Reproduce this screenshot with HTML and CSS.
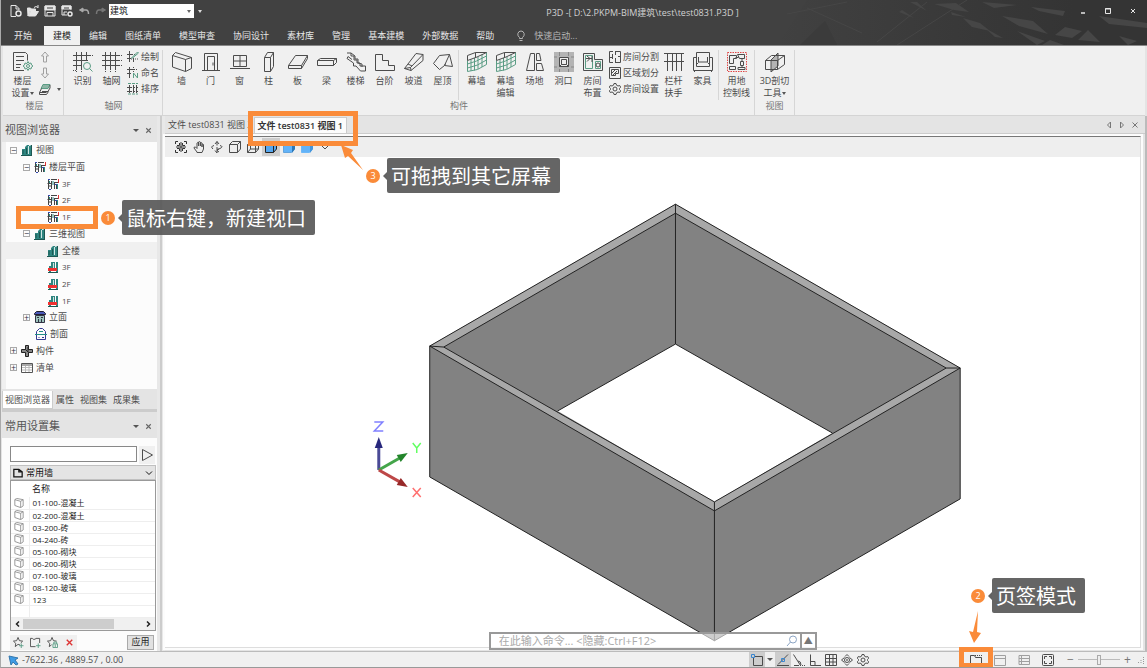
FILE: index.html
```html
<!DOCTYPE html>
<html lang="zh-CN">
<head>
<meta charset="utf-8">
<meta name="viewport" content="width=device-width, initial-scale=1">
<title>P3D</title>
<link rel="stylesheet" href="styles.css">
</head>
<body>
<svg class="sprite" aria-hidden="true">
  <symbol id="wall" viewBox="0 0 20 20"><path d="M.5 3.500l13 4v12l-13-4.500zM.5 3.500l3-3 16 5-6 2M19.500 5.500v11l-6 3"/></symbol>
  <symbol id="door" viewBox="0 0 20 20"><path d="M1 18.500h18M3.500 18.500v-17h13v17M6.500 18.500v-14h7v14M12 10.500v3"/></symbol>
  <symbol id="window" viewBox="0 0 20 20"><path d="M3.500 3.500h13v11h-13zM10 3.500v11M3.500 9h13M0 16.500h20"/></symbol>
  <symbol id="column" viewBox="0 0 20 20"><path d="M5.500 5.500h6v14h-6zM5.500 5.500l3-5h6l-3 5M14.500 .5v14l-3 5"/></symbol>
  <symbol id="slab" viewBox="0 0 20 20"><path d="M.5 13.500l7-10h12l-6 10zM.5 13.500v3h13v-3M13.500 16.500l6-10v-3"/></symbol>
  <symbol id="beam" viewBox="0 0 20 20"><path d="M.5 8.500h16v5h-16zM.5 8.500l3-2h16l-3 2M19.500 6.500v4l-3 3"/></symbol>
  <symbol id="stair" viewBox="0 0 20 20"><path d="M1 1h4v3h3v4h3v3h3v3h5.500v5h-5L10 14H7.500v-3L1 6.500l1-2 4 3M5 1l4 3v3h3v4l4 1v3"/></symbol>
  <symbol id="steps" viewBox="0 0 20 20"><path d="M.5 2.500v16h19v-5h-6v-5h-6v-6z"/></symbol>
  <symbol id="ramp" viewBox="0 0 20 20"><path d="M.5 16.500L12 1.500l7 1v6L7 18.500zM.5 16.500l6-1 12.500-13M6.500 15.500l.5 3M4 12l4 2"/></symbol>
  <symbol id="roof" viewBox="0 0 20 20"><path d="M.5 11.500l6-8 10-1-5 11-5 4zM16.500 2.500l3 12-8-1M11.500 13.500l1-2"/></symbol>
  <symbol id="curtain" viewBox="0 0 20 20"><path class="green" d="M.5 8.500v11l10-2 9-5V.500M.5 12l9-3 10-5M.5 16l10-3 9-5M4 7.500V19M7.500 6v12.500M11 5v12M15 2.500V15"/><path d="M.5 8.500v-5l8-3h11L10 5 .5 8.500M8.500 .5v5"/></symbol>
  <symbol id="site" viewBox="0 0 20 20"><path d="M5.500 1.500h4v17h-8zM11.500 1.500h3l1.500 7h-4.500zM11.500 11.500h5l2 7h-7z"/></symbol>
  <symbol id="hole" viewBox="0 0 20 20"><path class="greyfill" d="M0 0h20v20H0z"/><path d="M5.500 5.500h9v9h-9z" fill="#eee"/><path d="M7.500 7.500h5v5h-5zM5.500 14.500l2-2M14.500 14.500l-2-2"/><path stroke="#888" d="M5.500 0v4M14.500 0v4M0 5h3M17 5h3M0 15h3M17 15h3M5.500 17v3M14.500 17v3"/></symbol>
  <symbol id="room" viewBox="0 0 20 20"><path class="green" d="M2.500 3.500h7v13h-7zM12.500 9.500h5v7h-5z"/><path d="M.5 1.500h11v6h8v11H.5zM3 6.500h6M4 4l3 2.500-3 3M9 4v6"/><circle cx="15" cy="13" r="2"/></symbol>
  <symbol id="railing" viewBox="0 0 20 20"><path d="M0 1.500h20M0 9.500h20M3.500 1v18M8.500 1v18M12.500 1v18M17.500 1v18"/></symbol>
  <symbol id="sofa" viewBox="0 0 20 20"><path d="M3.500 6V.500h13V6M3.500 5.500h-3v13h19v-13h-3M3.500 5.500v9h13v-9M5.500 5v5h9V5M5.500 10.500l-2 2M14.500 10.500l2 2M1.500 18.500v1.500M18.500 18.500v1.500"/></symbol>
  <symbol id="land" viewBox="0 0 20 20"><path class="red" d="M.5 .500h19v19H.5z" stroke-dasharray="1.500 1"/><path d="M2.500 3.500h7v3h-3v5h-4zM10.500 2.500h7v4h-5zM13.500 9.500h3v4h-3zM2.500 14.500h6v3h-6zM11 15.500h7v2h-7zM15 6.500v3M15 13v2M8.500 5.500h3"/></symbol>
  <symbol id="clip" viewBox="0 0 20 20"><path class="greyfill" d="M6 8l7-7v13l-7 6z"/><path d="M.5 8.500h12v9H.5zM.5 8.500l6-5h13l-7 5M19.500 3.500v9l-7 5M6 8l7-7v13l-7 6z"/></symbol>
  <symbol id="floorset" viewBox="0 0 20 20"><path d="M11 18.500H.5V.500h12l2 2v6M3 4.500h8M3 8.500h8M3 12.500h5M3 15.500h4"/><g class="green"><path d="M15 9.500l1 2 2-.5.5 2 1.500 1-1.500 1-.5 2-2-.5-1 2-1-2-2 .5-.5-2-1.500-1 1.500-1 .5-2 2 .5z"/><circle cx="15" cy="14" r="1.500"/></g></symbol>
  <symbol id="identify" viewBox="0 0 20 20"><path d="M0 3.500h17M0 8.500h15M0 13.500h9M3.500 0v17M8.500 0v17M13.500 0v8"/><path stroke-dasharray="1 1" d="M17 3.500h3M3.500 17v3M8.500 17v3M0 18.500h3"/><g class="green"><circle cx="14" cy="14" r="3.500"/><path d="M16.500 16.500l3 3"/></g></symbol>
  <symbol id="grid" viewBox="0 0 20 20"><path d="M0 3.500h17M0 8.500h17M0 13.500h17M3.500 0v17M8.500 0v17M13.500 0v17"/><path stroke-dasharray="1 1" d="M17 3.500h3M17 8.500h3M17 13.500h3M3.500 17v3M8.500 17v3M13.500 17v3"/></symbol>
  <symbol id="up" viewBox="0 0 12 12"><path d="M6 1l3.500 4H7.500v6h-3V5h-2z"/></symbol>
  <symbol id="down" viewBox="0 0 12 12"><path d="M6 11l3.500-4H7.500V1h-3v6h-2z"/></symbol>
  <symbol id="layers" viewBox="0 0 12 12"><path class="green" d="M4 1.500h7l-2 4H2z" fill="#8db5a5"/><path d="M11 2v3L9 8.500H3M2.500 5.500L.5 9.500v2h7l2-3M.5 9.500h7"/></symbol>
  <symbol id="draw" viewBox="0 0 12 12"><path d="M0 3.500h6M0 7.500h4M2.500 0v11M6.500 7v4" /><path d="M7 3.500h2M4 8h7" stroke-dasharray="1 1"/><path class="green" d="M4.500 7l6-6 1 1-6 5z"/></symbol>
  <symbol id="rename" viewBox="0 0 12 12"><path d="M0 2.500h7M0 6.500h4M2.500 0v11" /><path d="M7 2.500h4M6.500 0v5" stroke-dasharray="1 1"/><path class="green" d="M6.500 11V6l4 5V6"/></symbol>
  <symbol id="sort" viewBox="0 0 12 12"><path stroke-dasharray="2 1" d="M0 4.500h12M0 8.500h12"/><path d="M2.500 2v8M6.500 2v8M9.500 2v8"/><path class="green" d="M1 .5h3M5 .5h3M9 .5h2M1 11h3M5 11h3M9 11h2"/></symbol>
  <symbol id="split" viewBox="0 0 12 12"><path d="M4 .5H.5v11H4M6.500 .5h5v11h-5M3.500 3v5M0 6.500h3M6.500 0v4M9 5.500h3M6.500 7v5"/></symbol>
  <symbol id="zone" viewBox="0 0 12 12"><path d="M.5 .500h11v11H.5zM2.500 2.500h7v4h-3v2h-4zM3 6l3-3M4 8l4-4"/></symbol>
  <symbol id="gear" viewBox="0 0 12 12"><path d="M5 .5h2l.5 1.700L9 3l1.700-.5 1 1.700L10.500 5.500v1l1.200 1.300-1 1.700L9 9l-1.500.8L7 11.500H5l-.5-1.700L3 9l-1.700.5-1-1.700L1.500 6.500v-1L.3 4.200l1-1.700L3 3l1.500-.8z"/><circle cx="6" cy="6" r="2"/></symbol>
  <symbol id="new" viewBox="0 0 12 12"><path d="M6 11.500H1V.500h5l3 3V5M6 .5V4h3"/><circle cx="8.500" cy="8.500" r="2.500" stroke-width="1.500"/></symbol>
  <symbol id="open" viewBox="0 0 12 12"><path fill="currentColor" d="M.5 3h3l1 1h4v2H3L1 11zM3.500 6.500h8l-3 4.500H1.500z"/><path d="M7 2.500q2-2 4 0M11 0v3"/></symbol>
  <symbol id="save" viewBox="0 0 12 12"><path fill="currentColor" d="M1 1h10v4H1z"/><path d="M1 1h10v10H1zM3 11V7.500h6V11"/><path d="M3 3h6" stroke="#414141"/></symbol>
  <symbol id="saveas" viewBox="0 0 12 12"><path fill="currentColor" d="M1 1h9v3H1z"/><path d="M6 10H1V1h9v4M3 10V7h3"/><path stroke="#414141" d="M3 3h5"/><circle cx="9" cy="9" r="2" stroke-width="1.500"/></symbol>
  <symbol id="undo" viewBox="0 0 12 12"><path fill="currentColor" d="M5 3v4L1.500 5z"/><path d="M4 5h4q2.500 0 2.500 4" stroke-width="1.500"/></symbol>
  <symbol id="bulb" viewBox="0 0 12 12"><path d="M4.500 8.500v-1Q2.500 6 2.800 3.700 3.500 1 6 1t3.200 2.700Q9.500 6 7.500 7.500v1zM4.500 10.500h3"/></symbol>
  <symbol id="city" viewBox="0 0 12 12"><path fill="#2f8580" stroke="none" d="M1 5h3v6H1zM4 3l2-2h2v10H4zM8 2l3-1v10H8z"/><path stroke="#1d5752" d="M0 11.500h11M2 6v4M5.500 4v6M10.500 1v10"/><path stroke="#cfe6e3" d="M7.500 2v8"/></symbol>
  <symbol id="cityred" viewBox="0 0 12 12"><path fill="#2f8580" stroke="none" d="M2 5h2v6H2zM4 1h4v9H4zM9 1h2v10H9z"/><path stroke="#cfe6e3" d="M6.500 2v6"/><path fill="#f03030" stroke="none" d="M1 7h9v3H1z"/><path stroke="#1d5752" d="M1 11.500h10"/></symbol>
  <symbol id="plan" viewBox="0 0 12 12"><path stroke="#444" d="M1.500 1v10M.5 5.500h4M4.500 3v8M4 1.500h6M2 8h3M7.500 4v7M7 4.500h4M9.500 7v4"/><path stroke="#2c8b85" d="M2.500 3v2M6 3v4M10.500 6v5"/><path stroke="#d33" d="M11.500 1v4"/><path stroke="#334ab0" d="M1 1.500h2M2 11.500h2M8 6.500h2"/></symbol>
  <symbol id="facade" viewBox="0 0 12 12"><path fill="#4a58b8" stroke="#223" d="M.5 2.500l2-2h7l2 2v1H.500z"/><path stroke="#334" fill="#9dc4bd" d="M1.500 4.500h9v7h-9z"/><path stroke="#334" d="M4.500 8v4M7.500 8v4M3 6.500h2M7 6.500h2"/></symbol>
  <symbol id="section" viewBox="0 0 12 12"><path stroke="#353a93" d="M1.500 6V3.500l3-3h3l3 3V6M1.500 7v4.500h9V7"/><path stroke="#238f88" d="M0 6.500h12M4 3.500h4"/><path stroke="#353a93" d="M3.500 9.500h1M7 9.500h2"/></symbol>
  <symbol id="component" viewBox="0 0 12 12"><path fill="#888" stroke="#222" d="M4.500 .500h3v4h4v3h-4v4h-3v-4h-4v-3h4z"/><path stroke="#222" d="M4.500 4.500l3 3M7 2v5"/></symbol>
  <symbol id="sheet" viewBox="0 0 12 12"><path fill="#fff" stroke="#555" d="M.5 1.500h11v9H.5z"/><path stroke="#555" d="M1 3h10"/><path stroke="#bbb" d="M1 5.500h10M1 8h10M4.500 4v6M8 4v6"/></symbol>
  <symbol id="fit" viewBox="0 0 12 12"><path d="M.5 3V.500H3M9 .5h2.500V3M11.500 9v2.500H9M3 11.500H.5V9M6 1v10M1 6h10M4.500 2v2.500H2M7.500 2v2.500H10M4.500 10V7.500H2M7.500 10V7.500H10" stroke="#333"/></symbol>
  <symbol id="hand" viewBox="0 0 12 12"><path d="M4 11L1 7q0-1.500 1.500-1L4 7.500V2q.8-1 1.500 0v3V1q.9-1 1.800 0v4-3q.9-.8 1.700 0v4-2.500q.8-.7 1.500 0V8L9 11.500H4z"/></symbol>
  <symbol id="orbit" viewBox="0 0 12 12"><path d="M2 8Q-1 5.500 3 4.500M9 4.500q4 1 0 3L6 8.500M4 3l2-2.500L8 3M6 .5v4M4 9.500L6 12V6M8 8l-2 1.500 2 1.500"/></symbol>
  <symbol id="cube" viewBox="0 0 12 12"><path d="M.5 3.500h8v8h-8zM.5 3.500l3-3h8l-3 3M11.500 .5V8l-3 3.500"/></symbol>
  <symbol id="wirecube" viewBox="0 0 12 12"><path d="M.5 3.500h8v8h-8zM.5 3.500l3-3h8l-3 3M11.500 .5V8l-3 3.500M3.500 .5V8h8M3.500 8l-3 3.500"/></symbol>
  <symbol id="bluecube" viewBox="0 0 12 12"><path fill="#56a7ef" stroke="#222" d="M.5 3.500l3-3h8V8l-3 3.500h-8z"/><path stroke="#222" d="M.5 3.500h8v8M8.500 3.500l3-3"/></symbol>
  <symbol id="shaded" viewBox="0 0 12 12"><path fill="#62b3f8" stroke="#62a3dc" d="M.5 3.500l3-3h8V8l-3 3.500h-8z"/><path fill="#2d78b8" stroke="none" d="M9 4l3-3v7l-3 4z"/></symbol>
  <symbol id="paleblue" viewBox="0 0 12 12"><path fill="#62b3f8" stroke="#6db8f8" d="M.5 3.500l3-3h8V8l-3 3.500h-8z"/><path fill="#4596dc" stroke="none" d="M9 4l3-3v7l-3 4z"/></symbol>
  <symbol id="more" viewBox="0 0 12 12"><path d="M2.500 4.500L6 8l3.500-3.500L6 1z"/></symbol>
  <symbol id="play" viewBox="0 0 12 12"><path d="M1.500 .5l10 5.500-10 5.500z"/></symbol>
  <symbol id="rowwall" viewBox="0 0 12 12"><path d="M1 2l7 2v7.500L1 9zM1 2l2-1.500 8 1.500-3 2M11 2v7.500l-3 2"/></symbol>
  <symbol id="page" viewBox="0 0 12 12"><path d="M1 1.500h6l4 3v6H1zM7 1.500v3h4" stroke-width="1.500"/></symbol>
  <symbol id="star" viewBox="0 0 12 12"><path d="M7.500 8.500L5.500 8 2.500 10.500 3 7 .5 4.500 4 4l1.500-3.500L7 4l3.500.5-2 2"/><path class="green" d="M6.500 9.500h5M9 7v5"/></symbol>
  <symbol id="addset" viewBox="0 0 12 12"><path d="M6 10.500H.5v-9h2l1 1h2l1-1h4v5"/><path class="green" d="M6.500 9.500h5M9 7v5"/></symbol>
  <symbol id="lockstar" viewBox="0 0 12 12"><path d="M5 8.500L2.500 10.500 3 7 .5 4.500 4 4l1.500-3.500L7 4l3.500.5"/><path class="green" d="M6.500 7.500h5v4h-5zM7.500 7.500v-2h3v2M9 8v3"/></symbol>
  <symbol id="cross" viewBox="0 0 12 12"><path d="M3 3l6 6M9 3L3 9" stroke-width="1.500"/></symbol>
  <symbol id="snap" viewBox="0 0 12 12"><path d="M3 2.500h8.500v9h-9V4"/><path stroke="#3a86d0" d="M.5 .500h3v3h-3z"/></symbol>
  <symbol id="near" viewBox="0 0 12 12"><path d="M0 11.500h12M1 10.500l10-10"/><path stroke="#3a86d0" d="M4.500 4.500h3v3h-3z"/></symbol>
  <symbol id="polar" viewBox="0 0 12 12"><path d="M.5 .5l7 11M1 11.500h5M5 7q3 0 3 4"/><path stroke-dasharray="1 1" d="M7 11.500h5"/></symbol>
  <symbol id="ortho" viewBox="0 0 12 12"><path d="M1.500 .5v11H12M1.500 7.500H6v4"/></symbol>
  <symbol id="mesh" viewBox="0 0 12 12"><path d="M.5 .500h11v11H.5zM4.500 .5v11M8 .5v11M.5 4.500h11M.5 8h11"/></symbol>
  <symbol id="target" viewBox="0 0 12 12"><path d="M.5 6L3.500 3.500M.5 6l3 2.500M11.500 6l-3-2.500M11.500 6l-3 2.500M4 2.500L6 .5l2 2M4 9.500l2 2 2-2"/><circle cx="6" cy="6" r="2.500"/><circle cx="6" cy="6" r=".5"/></symbol>
  <symbol id="tabmode" viewBox="0 0 12 12"><path d="M.5 1.500h4l1 2h6v8H.500z"/><path stroke-dasharray="1 1" d="M5 1.500h7"/></symbol>
  <symbol id="single" viewBox="0 0 12 12"><path d="M.5 1.500h11v10H.5zM.5 4.500h11"/></symbol>
  <symbol id="rows" viewBox="0 0 12 12"><path d="M1 1.500h10.500v9H1zM1 4.500h10.500M1 7.500h10.500M3.500 1v10"/></symbol>
  <symbol id="full" viewBox="0 0 12 12"><rect x=".5" y=".5" width="11" height="11" rx="1"/><path d="M2.500 5V2.500H5M7 2.500h2.500V5M9.500 7v2.500H7M5 9.500H2.500V7"/></symbol>
  <symbol id="pointer" viewBox="0 0 12 12"><path fill="#3f9be5" stroke="#3477ad" d="M1 2l9 2-3 2 3 4-2 1-3-3-2 3z"/></symbol>
  <symbol id="lens" viewBox="0 0 12 12"><circle cx="7" cy="4.500" r="3.500"/><path d="M4.500 7L1 11"/></symbol>
</svg>

<div class="app">
  <header class="header">
    <svg class="skyline" viewBox="0 0 370 45" preserveAspectRatio="xMaxYMin slice" aria-hidden="true">
      <defs><linearGradient id="fade"><stop offset="0" stop-color="#343434" stop-opacity="0"/><stop offset=".55" stop-color="#343434" stop-opacity=".7"/><stop offset=".8" stop-color="#343434"/></linearGradient></defs>
      <path fill="url(#fade)" d="M30 0h340v45H0z"/>
      <path class="beams" d="M10 14l60-12M120 45L190 0M100 42L150 2M30 8l55 25"/>
      <path fill="#3b3b3b" d="M23 45l25-24 12 24z"/>
      <g fill="#464646"><path d="M225 16l31 5 15 13-29-8zM254 7l34 4-2 5-24-5zM322 16l48 7v5l-38-4zM240 31l28 10-8 4zM278 35l10-8 17 4-10 7zM301 40l10-10 12 12zM186 18l17 5 10 8-18-4zM157 4l20 6 15 2-13-9zM205 2l35 3-23 3zM342 36l18 5-9 4zM208 28l18 10-8-1zM174 12l15 5-14-2zM140 2l10 9-17-9zM125 10l12 8-15-6zM265 45l8-5 14 5z"/></g>
    </svg>
    <div class="titlebar">
      <div class="quick">
        <button aria-label="新建"><svg class="i12"><use href="#new"/></svg></button>
        <button aria-label="打开"><svg class="i12"><use href="#open"/></svg></button>
        <button aria-label="保存"><svg class="i12"><use href="#save"/></svg></button>
        <button aria-label="另存为"><svg class="i12"><use href="#saveas"/></svg></button>
        <button aria-label="撤销" class="dim"><svg class="i12"><use href="#undo"/></svg></button>
        <button aria-label="重做" class="dimmer"><svg class="i12 flip"><use href="#undo"/></svg></button>
      </div>
      <div class="profile"><select aria-label="专业"><option>建筑</option></select></div>
      <button class="customize" aria-label="自定义"><i class="caret"></i></button>
      <h1 class="title">P3D -[ D:\2.PKPM-BIM建筑\test\test0831.P3D ]</h1>
      <div class="winctl">
        <button aria-label="最小化"><svg viewBox="0 0 8 8"><path d="M2 6h4" stroke-width="1.500"/></svg></button>
        <button aria-label="最大化"><svg viewBox="0 0 8 8"><path d="M1.500 1.500h5v5h-5zM1 2h6"/></svg></button>
        <button aria-label="关闭"><svg viewBox="0 0 8 8"><path d="M2 2l4 4M6 2L2 6"/></svg></button>
      </div>
    </div>
    <nav class="menu">
      <button class="first">开始</button><button class="active">建模</button><button>编辑</button><button>图纸清单</button><button>模型审查</button><button>协同设计</button><button>素材库</button><button>管理</button><button>基本建模</button><button>外部数据</button><button>帮助</button>
      <label class="launch"><svg class="i12"><use href="#bulb"/></svg><input placeholder="快速启动..." aria-label="快速启动"></label>
    </nav>
  </header>

  <section class="ribbon">
    <div class="group g-floor">
      <div class="tools">
        <button class="tool"><svg class="i20"><use href="#floorset"/></svg><span>楼层<br>设置<i class="caret"></i></span></button>
        <div class="stack">
          <button aria-label="上移"><svg class="i12 grey"><use href="#up"/></svg></button>
          <button aria-label="下移"><svg class="i12 grey"><use href="#down"/></svg></button>
          <button aria-label="楼层显示"><svg class="i12"><use href="#layers"/></svg><i class="caret spaced"></i></button>
        </div>
      </div>
      <h2>楼层</h2>
    </div>
    <div class="group g-axis">
      <div class="tools">
        <button class="tool"><svg class="i20"><use href="#identify"/></svg><span>识别</span></button>
        <button class="tool"><svg class="i20"><use href="#grid"/></svg><span>轴网</span></button>
        <div class="stack">
          <button><svg class="i12"><use href="#draw"/></svg>绘制</button>
          <button><svg class="i12"><use href="#rename"/></svg>命名</button>
          <button><svg class="i12"><use href="#sort"/></svg>排序</button>
        </div>
      </div>
      <h2>轴网</h2>
    </div>
    <div class="group g-parts">
      <div class="tools">
        <button class="tool"><svg class="i20"><use href="#wall"/></svg><span>墙</span></button>
        <button class="tool"><svg class="i20"><use href="#door"/></svg><span>门</span></button>
        <button class="tool"><svg class="i20"><use href="#window"/></svg><span>窗</span></button>
        <button class="tool"><svg class="i20"><use href="#column"/></svg><span>柱</span></button>
        <button class="tool"><svg class="i20"><use href="#slab"/></svg><span>板</span></button>
        <button class="tool"><svg class="i20"><use href="#beam"/></svg><span>梁</span></button>
        <button class="tool"><svg class="i20"><use href="#stair"/></svg><span>楼梯</span></button>
        <button class="tool"><svg class="i20"><use href="#steps"/></svg><span>台阶</span></button>
        <button class="tool"><svg class="i20"><use href="#ramp"/></svg><span>坡道</span></button>
        <button class="tool"><svg class="i20"><use href="#roof"/></svg><span>屋顶</span></button>
        <i class="rule"></i>
        <button class="tool"><svg class="i20"><use href="#curtain"/></svg><span>幕墙</span></button>
        <button class="tool"><svg class="i20"><use href="#curtain"/></svg><span>幕墙<br>编辑</span></button>
        <button class="tool"><svg class="i20"><use href="#site"/></svg><span>场地</span></button>
        <button class="tool"><svg class="i20"><use href="#hole"/></svg><span>洞口</span></button>
        <button class="tool"><svg class="i20"><use href="#room"/></svg><span>房间<br>布置</span></button>
        <div class="stack">
          <button><svg class="i12"><use href="#split"/></svg>房间分割</button>
          <button><svg class="i12"><use href="#zone"/></svg>区域划分</button>
          <button><svg class="i12"><use href="#gear"/></svg>房间设置</button>
        </div>
        <button class="tool"><svg class="i20"><use href="#railing"/></svg><span>栏杆<br>扶手</span></button>
        <button class="tool"><svg class="i20"><use href="#sofa"/></svg><span>家具</span></button>
        <i class="rule"></i>
        <button class="tool"><svg class="i20"><use href="#land"/></svg><span>用地<br>控制线</span></button>
      </div>
      <h2>构件</h2>
    </div>
    <div class="group g-view">
      <div class="tools">
        <button class="tool"><svg class="i20"><use href="#clip"/></svg><span>3D剖切<br>工具<i class="caret"></i></span></button>
      </div>
      <h2>视图</h2>
    </div>
  </section>

  <div class="workspace">
    <aside class="side">
      <section class="browser">
        <header class="panehead"><h2>视图浏览器</h2><button aria-label="菜单"><i class="caret big"></i></button><button aria-label="关闭"><svg class="i12"><use href="#cross"/></svg></button></header>
        <ul class="tree">
          <li class="l1"><button class="exp" aria-label="折叠">−</button><svg class="i12"><use href="#city"/></svg>视图</li>
          <li class="l2"><button class="exp" aria-label="折叠">−</button><svg class="i12"><use href="#plan"/></svg>楼层平面</li>
          <li class="l3"><svg class="i12"><use href="#plan"/></svg>3F</li>
          <li class="l3"><svg class="i12"><use href="#plan"/></svg>2F</li>
          <li class="l3"><svg class="i12"><use href="#plan"/></svg>1F</li>
          <li class="l2"><button class="exp" aria-label="折叠">−</button><svg class="i12"><use href="#city"/></svg>三维视图</li>
          <li class="l3 current"><svg class="i12"><use href="#city"/></svg>全楼</li>
          <li class="l3"><svg class="i12"><use href="#cityred"/></svg>3F</li>
          <li class="l3"><svg class="i12"><use href="#cityred"/></svg>2F</li>
          <li class="l3"><svg class="i12"><use href="#cityred"/></svg>1F</li>
          <li class="l2"><button class="exp" aria-label="展开">+</button><svg class="i12"><use href="#facade"/></svg>立面</li>
          <li class="l2 leaf"><svg class="i12"><use href="#section"/></svg>剖面</li>
          <li class="l1"><button class="exp" aria-label="展开">+</button><svg class="i12"><use href="#component"/></svg>构件</li>
          <li class="l1"><button class="exp" aria-label="展开">+</button><svg class="i12"><use href="#sheet"/></svg>清单</li>
        </ul>
        <nav class="sidetabs"><button class="active">视图浏览器</button><button>属性</button><button>视图集</button><button>成果集</button></nav>
      </section>
      <section class="presets">
        <header class="panehead"><h2>常用设置集</h2><button aria-label="菜单"><i class="caret big"></i></button><button aria-label="关闭"><svg class="i12"><use href="#cross"/></svg></button></header>
        <div class="presetbody">
          <div class="find"><input aria-label="搜索"><button aria-label="执行"><svg class="i12"><use href="#play"/></svg></button></div>
          <div class="kind"><svg class="i12"><use href="#page"/></svg><select aria-label="类别"><option>常用墙</option></select><svg class="chev" viewBox="0 0 8 8"><path d="M1 2.500l3 3 3-3"/></svg></div>
          <div class="list">
            <table>
              <thead><tr><th></th><th>名称</th></tr></thead>
              <tbody>
                <tr><td><svg class="i12"><use href="#rowwall"/></svg></td><td>01-100-混凝土</td></tr>
                <tr><td><svg class="i12"><use href="#rowwall"/></svg></td><td>02-200-混凝土</td></tr>
                <tr><td><svg class="i12"><use href="#rowwall"/></svg></td><td>03-200-砖</td></tr>
                <tr><td><svg class="i12"><use href="#rowwall"/></svg></td><td>04-240-砖</td></tr>
                <tr><td><svg class="i12"><use href="#rowwall"/></svg></td><td>05-100-砌块</td></tr>
                <tr><td><svg class="i12"><use href="#rowwall"/></svg></td><td>06-200-砌块</td></tr>
                <tr><td><svg class="i12"><use href="#rowwall"/></svg></td><td>07-100-玻璃</td></tr>
                <tr><td><svg class="i12"><use href="#rowwall"/></svg></td><td>08-120-玻璃</td></tr>
                <tr><td><svg class="i12"><use href="#rowwall"/></svg></td><td>123</td></tr>
                <tr><td></td><td></td></tr>
              </tbody>
            </table>
            <div class="hscroll"><svg viewBox="0 0 8 8"><path d="M5 1.500L2.500 4 5 6.500"/></svg><div class="track"><div class="thumb"></div></div><svg viewBox="0 0 8 8"><path d="M3 1.500L5.500 4 3 6.500"/></svg></div>
          </div>
          <div class="actions">
            <button aria-label="收藏"><svg class="i12"><use href="#star"/></svg></button>
            <button aria-label="新建集"><svg class="i12"><use href="#addset"/></svg></button>
            <button aria-label="锁定"><svg class="i12"><use href="#lockstar"/></svg></button>
            <button aria-label="删除" class="del"><svg class="i12"><use href="#cross"/></svg></button>
            <button class="apply">应用</button>
          </div>
        </div>
      </section>
    </aside>
    <div class="splitter"></div>
    <main class="docs">
      <nav class="doctabs">
        <button>文件 test0831 视图 2</button><button class="active">文件 test0831 视图 1</button>
        <div class="docctl">
          <button aria-label="上一个"><svg viewBox="0 0 8 8"><path d="M5.500 1v6L2.500 4z"/></svg></button>
          <button aria-label="下一个"><svg viewBox="0 0 8 8"><path d="M2.500 1v6l3-3z"/></svg></button>
          <button aria-label="关闭"><svg viewBox="0 0 8 8"><path d="M1.500 1.500l5 5M6.500 1.500l-5 5"/></svg></button>
        </div>
      </nav>
      <div class="view">
        <div class="viewbar">
          <button aria-label="全图"><svg class="i12"><use href="#fit"/></svg></button>
          <button aria-label="平移"><svg class="i12"><use href="#hand"/></svg></button>
          <button aria-label="旋转"><svg class="i12"><use href="#orbit"/></svg></button>
          <button aria-label="消隐"><svg class="i12"><use href="#cube"/></svg></button>
          <button aria-label="线框"><svg class="i12"><use href="#wirecube"/></svg></button>
          <button aria-label="着色线框" class="on"><svg class="i12"><use href="#bluecube"/></svg></button>
          <button aria-label="着色"><svg class="i12"><use href="#shaded"/></svg></button>
          <button aria-label="真实"><svg class="i12"><use href="#paleblue"/></svg></button>
          <button aria-label="更多"><svg class="i12"><use href="#more"/></svg></button>
        </div>
        <div class="canvas">
          <svg class="model" viewBox="165 157 976 490" role="img" aria-label="三维模型">
            <path class="face" d="M430 346L676 204 961 368V499L715 641 430 477z"/>
            <path class="floor" d="M676 344L833 433 715 502 558 411z"/>
            <path class="top" fill-rule="evenodd" d="M430 346L676 204 961 368 715 511zM444 347L715 502 947 368 676 213z"/>
            <path class="edge" d="M676 204V344M558 411L676 344 833 433M430 346L444 347M961 368H947M715 502V641M430 346V477L715 641 961 499V368"/>
            <g class="triad">
              <path stroke="#4a4a96" d="M379 470V445"/><path fill="#27277c" d="M379 437l4 11h-8z"/>
              <path stroke="#44a54a" d="M379 470L400 458"/><path fill="#23852b" d="M408 453l-7 9-4-7z"/>
              <path stroke="#bd4747" d="M379 470L400 482"/><path fill="#972929" d="M408 487l-11-2 4-7z"/>
              <path class="axis" stroke="#8080ff" d="M374.500 422h8.500l-8.500 9h9"/>
              <path class="axis" stroke="#62ff62" d="M413 443l4 5 4-5M417 448v5"/>
              <path class="axis" stroke="#ff6f6f" d="M413 488l8 9M421 488l-8 9"/>
            </g>
          </svg>
          <div class="command"><input placeholder="在此输入命令... &lt;隐藏:Ctrl+F12&gt;" aria-label="命令"><svg class="i12"><use href="#lens"/></svg><button aria-label="展开">▲</button></div>
        </div>
      </div>
    </main>
  </div>

  <footer class="status">
    <svg class="i12"><use href="#pointer"/></svg>
    <output class="coords">-7622.36 , 4889.57 , 0.00</output>
    <div class="snaps">
      <button class="on" aria-label="捕捉"><svg class="i12"><use href="#snap"/></svg></button><i class="caret big"></i>
      <button class="on" aria-label="最近点"><svg class="i12"><use href="#near"/></svg></button>
      <button aria-label="极轴"><svg class="i12"><use href="#polar"/></svg></button>
      <button aria-label="正交"><svg class="i12"><use href="#ortho"/></svg></button>
      <button aria-label="网格"><svg class="i12"><use href="#mesh"/></svg></button>
      <button aria-label="目标"><svg class="i12"><use href="#target"/></svg></button>
      <button aria-label="设置"><svg class="i12"><use href="#gear"/></svg></button>
    </div>
    <div class="modes">
      <button aria-label="页签模式"><svg class="i12"><use href="#tabmode"/></svg></button>
      <button aria-label="单窗口" class="grey"><svg class="i12"><use href="#single"/></svg></button>
      <button aria-label="平铺" class="grey"><svg class="i12"><use href="#rows"/></svg></button>
      <button aria-label="全屏"><svg class="i12"><use href="#full"/></svg></button>
    </div>
    <div class="zoom"><button aria-label="缩小">−</button><input type="range" aria-label="缩放"><button aria-label="放大">+</button></div>
    <svg class="grip" viewBox="0 0 8 8"><path stroke-dasharray="1 1" d="M7.500 1v7M5 4v4M2.500 6v2"/></svg>
  </footer>

  <div class="mark m1"></div><div class="mark m2"></div><div class="mark m3"></div>
  <div class="note n1"><b>1</b><p>鼠标右键，新建视口</p></div>
  <div class="note n2"><b>2</b><p>页签模式</p></div>
  <div class="note n3"><b>3</b><p>可拖拽到其它屏幕</p></div>
  <svg class="arrow a2" viewBox="0 0 12 32"><path d="M9 0L8 21 12 22 5 32 0 20 4 21z"/></svg>
  <svg class="arrow a3" viewBox="0 0 22 26"><path d="M0 0L12 5 10 8 22 25 7 11 4 13z"/></svg>
</div>
</body>
</html>
```
FILE: styles.css
```css
* { box-sizing: border-box; }
body {
  margin: 0;
  font: 9px/12px "Open Sans", "Noto Sans CJK SC", sans-serif;
  color: #4c4c4c;
}
button, input, select {
  margin: 0;
  padding: 0;
  border: 0;
  border-radius: 0;
  background: none;
  font: inherit;
  color: inherit;
}
button { display: flex; align-items: center; justify-content: center; white-space: nowrap; }
select { appearance: none; }
h1, h2, p, ul { margin: 0; padding: 0; font-size: inherit; font-weight: 400; list-style: none; }
svg { fill: none; stroke: currentColor; stroke-width: 1; flex: none; }
.sprite { position: absolute; width: 0; height: 0; }
.i12 { width: 12px; height: 12px; }
.i20 { width: 20px; height: 20px; }
.flip { transform: scaleX(-1); }
.green { stroke: #5a9c84; }
.red { stroke: #e04848; }
.greyfill { fill: #b4b4b4; stroke: none; }
.grey { color: #a0a0a0; }
.caret {
  display: inline-block;
  border: 2px solid transparent;
  border-top: 3px solid #555;
  border-bottom: 0;
  vertical-align: middle;
}
.caret.big { border-width: 3px 3px 0; }

.app {
  position: relative;
  display: flex;
  flex-direction: column;
  height: 100vh;
  overflow: hidden;
  background: #e4e4e4;
  border-left: 1px solid #aaa;
  border-bottom: 1px solid #999;
}

/* title bar and menu */
.header { position: relative; background: #414141; color: #e6e6e6; border-bottom: 1px solid #888; }
.skyline { position: absolute; right: 0; top: 0; width: 370px; height: 100%; stroke: none; }
.beams { stroke: #464646; }
.titlebar { position: relative; display: flex; align-items: center; height: 26px; padding-bottom: 4px; }
.quick { display: flex; gap: 5px; padding-left: 9px; }
.dim { color: #aaa; }
.dimmer { color: #777; }
.profile { position: relative; margin-left: 2px; width: 85px; height: 14px; background: #fff; color: #111; }
.profile::after { content: ""; position: absolute; right: 3px; top: 6px; border: 2px solid transparent; border-top: 3px solid #666; border-bottom: 0; }
.profile select { display: block; width: 100%; height: 14px; padding-left: 1px; }
.customize { width: 12px; }
.customize .caret { border-top-color: #ddd; }
.title { flex: 1; padding-top: 4px; text-align: center; color: #d2d2d2; }
.winctl { display: flex; gap: 17px; padding-right: 10px; }
.winctl svg { width: 8px; height: 8px; }
.menu { position: relative; display: flex; height: 19px; padding-left: 4px; }
.menu button { padding: 0 9px; }
.menu .first { margin-right: 3px; }
.menu .active { background: #f0f0f0; color: #222; }
.launch { display: flex; align-items: center; margin-left: 12px; gap: 7px; color: #b5b5b5; }
.launch input { width: 60px; }
.launch input::placeholder { color: #b5b5b5; }

/* ribbon */
.ribbon { display: flex; flex: none; height: 70px; margin: 0 2px; padding-top: 4px; background: #f0f0f0; border-bottom: 1px solid #d4d4d4; }
.group { display: flex; flex-direction: column; border-right: 1px solid #d6d6d6; }
.group h2 { text-align: center; color: #777; }
.tools { display: flex; height: 50px; }
.tool { flex-direction: column; justify-content: flex-start; width: 29px; padding-top: 2px; gap: 3px; }
.tool span { line-height: 12px; }
.stack { display: flex; flex-direction: column; gap: 4px; padding-top: 1px; }
.stack button { justify-content: flex-start; gap: 2px; height: 12px; }
.caret.spaced { margin-left: 4px; }
.g-floor { padding: 0 2px 0 5px; }
.g-floor .stack { padding-left: 2px; }
.g-axis { padding: 0 3px 0 4px; }
.g-axis .stack { padding-left: 1px; }
.g-parts { padding: 0 3px 0 4px; }
.g-parts .stack { padding-left: 2px; }
.g-view { padding: 0 5px; }
.rule { width: 1px; margin: 0 3px 0 1px; background: #d6d6d6; }

/* workspace */
.workspace { display: flex; flex: 1; min-height: 0; }
.side { display: flex; flex-direction: column; width: 155px; margin-left: 1px; background: #f0f0f0; }
.panehead { display: flex; align-items: center; flex: none; height: 26px; padding: 2px 2px 0 3px; background: #e4e4e4; color: #666; }
.panehead h2 { flex: 1; font-size: 11px; color: #555; }
.panehead button { width: 13px; }
.panehead .i12 { width: 9px; height: 9px; }
.browser { flex: none; border-bottom: 3px solid #ccc; }
.tree { display: grid; grid-template-rows: repeat(14, 1fr); height: 247px; padding-bottom: 13px; margin-left: 4px; background: #fcfcfc; }
.tree li { display: flex; align-items: center; gap: 3px; }
.l1 { padding-left: 4px; }
.l2 { padding-left: 17px; }
.l3 { padding-left: 41px; font-size: 8px; }
.tree .leaf { padding-left: 29px; }
.tree .current { background: #f0f0f0; font-size: 9px; }
.exp { width: 7px; height: 7px; border: 1px solid #aaa; color: #334; line-height: 5px; margin-right: 1px; }
.sidetabs { display: flex; height: 20px; padding-top: 2px; background: #e4e4e4; }
.sidetabs button { padding: 0 3px; }
.sidetabs .active { padding: 0 2px; background: #fff; border: 1px solid #ccc; border-top: 0; }
.presets { display: flex; flex-direction: column; flex: 1; min-height: 0; }
.presetbody { display: flex; flex-direction: column; flex: 1; min-height: 0; padding: 8px 1px 0 8px; background: #fcfcfc; }
.find { display: flex; height: 18px; gap: 2px; margin-bottom: 1px; }
.find input { flex: 1; min-width: 0; height: 16px; background: #fff; border: 1px solid #888; }
.find button { width: 16px; background: #f0f0f0; margin-right: 1px; }
.kind { display: flex; align-items: center; flex: none; height: 15px; padding: 0 2px; background: #e4e4e4; border: 1px solid #c0c0c0; color: #111; }
.kind select { flex: 1; padding-left: 3px; }
.chev { width: 8px; height: 8px; }
.kind .i12 { width: 10px; height: 10px; }
.list { display: flex; flex-direction: column; justify-content: space-between; flex: 1; min-height: 0; overflow: hidden; background: #fff; border: 1px solid #999; color: #222; }
table { width: 100%; border-collapse: collapse; font-size: 8px; }
th { height: 16px; padding: 0 3px; font-size: 9px; font-weight: 400; text-align: left; }
td { height: 12px; padding: 0 3px; line-height: 11px; border-bottom: 1px solid #eee; }
td:first-child { width: 18px; border-right: 1px solid #eee; color: #888; }
td .i12 { display: block; width: 10px; height: 10px; }
.hscroll { display: flex; align-items: center; flex: none; height: 12px; padding: 0 3px; gap: 1px; background: #f0f0f0; }
.hscroll svg { width: 8px; height: 8px; stroke-width: 1.5; }
.track { flex: 1; height: 10px; }
.thumb { width: 76%; height: 10px; background: #cdcdcd; }
.actions { display: flex; align-items: center; flex: none; height: 20px; padding-top: 2px; }
.actions button { width: 17px; height: 15px; background: #f0f0f0; }
.actions .i12 { width: 11px; height: 11px; }
.actions .del { color: #d33; width: 16px; }
.actions .apply { width: 27px; margin-left: auto; margin-right: 2px; background: #e1e1e1; border: 1px solid #aaa; color: #222; }
.splitter { width: 8px; background: #ccc; border-left: 3px solid #e8e8e8; border-right: 3px solid #e8e8e8; }

/* documents */
.docs { display: flex; flex-direction: column; flex: 1; min-width: 0; border-right: 2px solid #bbb; }
.doctabs { display: flex; flex: none; height: 17px; margin-top: 1px; border-bottom: 1px solid #ccc; }
.doctabs > button { padding: 0 1px 0 3px; }
.doctabs > .active { padding: 0 3px; background: #fcfcfc; border: 1px solid #ccc; border-bottom: 0; color: #333; font-weight: 600; }
.docctl { display: flex; margin-left: auto; gap: 5px; padding-right: 6px; color: #777; }
.docctl svg { width: 8px; height: 8px; }
.view { display: flex; flex-direction: column; flex: 1; min-height: 0; margin: 2px 4px 3px 0; background: #fff; border: 1px solid #ddd; border-top-color: #777; border-left: 0; outline: 2px solid #fcfcfc; }
.viewbar { display: flex; align-items: center; flex: none; height: 20px; padding-left: 7px; background: #eee; }
.viewbar button { width: 18px; height: 18px; }
.viewbar .on { background: #cdcdcd; }
.canvas { position: relative; flex: 1; min-height: 0; background: #fff; }
.model { display: block; width: 100%; height: 100%; }
.face { fill: #828282; stroke: none; }
.floor { fill: #fff; stroke: none; }
.top { fill: #a8a8a8; stroke: #222; }
.edge { stroke: #222; }
.triad path { stroke-width: 3; }
.triad path[fill] { stroke: none; }
.triad .axis { stroke-width: 1.5; }
.command { position: absolute; left: 33.2%; bottom: -3px; display: flex; align-items: center; width: 328px; height: 18px; border: 2px solid #999; background: rgba(255, 255, 255, .6); color: #8ca5c4; }
.command input { flex: 1; min-width: 0; padding-left: 8px; font-size: 11px; }
.command input::placeholder { color: #aaa; }
.command button { width: 15px; height: 14px; margin-left: 2px; border-left: 2px solid #999; color: #777; }

/* status bar */
.status { position: relative; display: flex; align-items: center; flex: none; height: 16px; padding: 0 3px 0 7px; background: #f0f0f0; border-top: 1px solid #bbb; }
.coords { flex: 1; padding-left: 2px; }
.snaps { display: flex; align-items: center; margin-right: 99px; }
.snaps button { width: 16px; height: 15px; }
.snaps .on { background: #cdcdcd; }
.snaps .caret { margin: 0 2px; }
.modes { display: flex; gap: 12px; margin-right: 13px; }
.zoom { display: flex; align-items: center; gap: 4px; color: #777; }
.zoom button { width: 7px; font-size: 12px; line-height: 12px; }
.zoom input { appearance: none; width: 42px; height: 10px; background: linear-gradient(#bbb, #bbb) center / 100% 1px no-repeat; }
.zoom input::-webkit-slider-thumb { appearance: none; width: 4px; height: 10px; background: #eee; border: 1px solid #aaa; }
.grip { width: 8px; height: 8px; margin-left: 5px; color: #999; }

/* tutorial notes laid over the window */
.mark { position: absolute; border: 5px solid #fa8b39; }
.m1 { left: 15px; top: 206px; width: 82px; height: 23px; }
.m2 { left: 247px; top: 111px; width: 110px; height: 35px; }
.m3 { right: 154px; bottom: -1px; width: 34px; height: 21px; }
.note { position: absolute; display: flex; align-items: center; gap: 7px; }
.note b { display: flex; align-items: center; justify-content: center; width: 14px; height: 14px; border-radius: 7px; background: #fa8b39; color: #fff; font-weight: 400; }
.note p { position: relative; height: 35px; padding: 0 9px 0 4px; border-radius: 2px; background: rgba(88, 88, 88, .92); color: #fff; font: 20px/36px "Noto Sans CJK SC", sans-serif; white-space: nowrap; }
.note p::before { content: ""; position: absolute; left: -4px; top: 14px; border: 4px solid transparent; border-right-color: #626262; border-left: 0; }
.n1 { left: 100px; top: 200px; }
.n2 { right: 62px; bottom: 54px; }
.n3 { left: 365px; top: 158px; }
.arrow { position: absolute; fill: #fa8b39; stroke: none; }
.a2 { right: 166px; bottom: 24px; width: 12px; height: 32px; }
.a3 { left: 340px; top: 145px; width: 22px; height: 26px; }
```
